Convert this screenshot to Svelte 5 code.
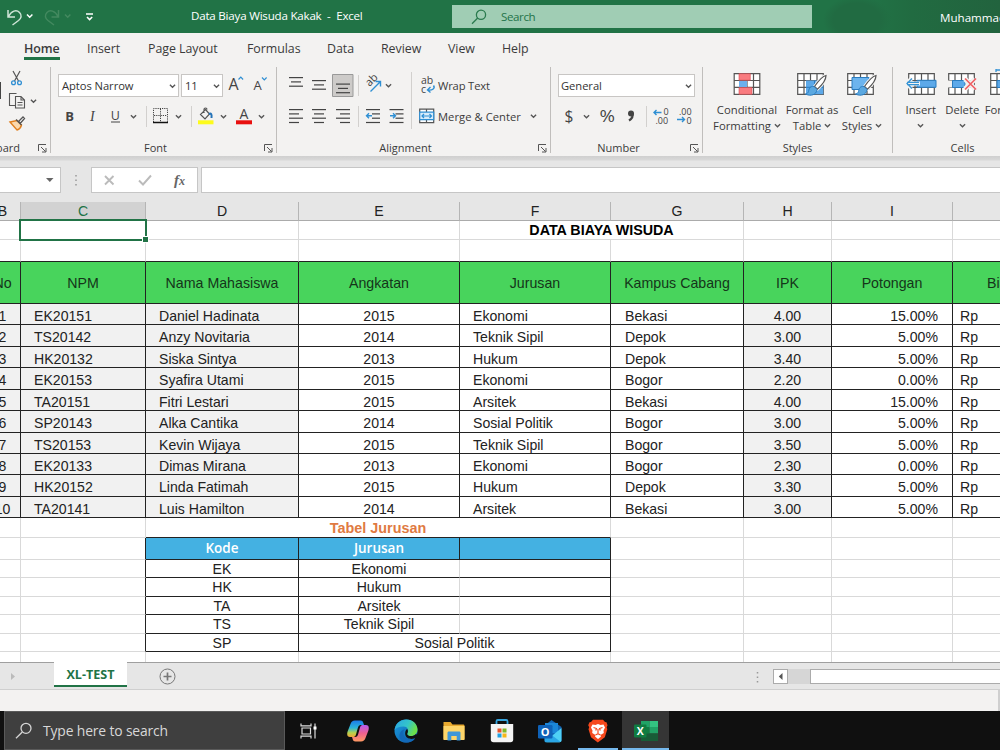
<script>
  const menu = ['Home', 'Insert', 'Page Layout', 'Formulas', 'Data', 'Review', 'View', 'Help'];
  const letters = ['B', 'C', 'D', 'E', 'F', 'G', 'H', 'I', ''];
  const heads = ['No', 'NPM', 'Nama Mahasiswa', 'Angkatan', 'Jurusan', 'Kampus Cabang', 'IPK', 'Potongan', 'Biaya'];

  const students = [
    ['EK20151', 'Daniel Hadinata', 2015, 'Ekonomi', 'Bekasi', '4.00', '15.00%'],
    ['TS20142', 'Anzy Novitaria', 2014, 'Teknik Sipil', 'Depok', '3.00', '5.00%'],
    ['HK20132', 'Siska Sintya', 2013, 'Hukum', 'Depok', '3.40', '5.00%'],
    ['EK20153', 'Syafira Utami', 2015, 'Ekonomi', 'Bogor', '2.20', '0.00%'],
    ['TA20151', 'Fitri Lestari', 2015, 'Arsitek', 'Bekasi', '4.00', '15.00%'],
    ['SP20143', 'Alka Cantika', 2014, 'Sosial Politik', 'Bogor', '3.00', '5.00%'],
    ['TS20153', 'Kevin Wijaya', 2015, 'Teknik Sipil', 'Bogor', '3.50', '5.00%'],
    ['EK20133', 'Dimas Mirana', 2013, 'Ekonomi', 'Bogor', '2.30', '0.00%'],
    ['HK20152', 'Linda Fatimah', 2015, 'Hukum', 'Depok', '3.30', '5.00%'],
    ['TA20141', 'Luis Hamilton', 2014, 'Arsitek', 'Bekasi', '3.00', '5.00%']
  ];
  const kinds = ['c shade', 'l shade', 'l shade', 'c', 'l', 'l wide-pad', 'c shade', 'r', 'rp'];
  const tall = [1, 3, 5, 8];

  const lookup = [
    ['EK', 'Ekonomi'],
    ['HK', 'Hukum'],
    ['TA', 'Arsitek'],
    ['TS', 'Teknik Sipil']
  ];
</script>

{#snippet chev(x, y)}
  <path class="chev" d="M{x - 2.6} {y - 1.3}l2.6 2.6 2.6-2.6" />
{/snippet}

{#snippet launcher()}
  <svg class="launcher" width="9" height="9" viewBox="0 0 9 9"><path d="M.5 7V.5H8M3 3l4.5 4.5M8 4v4H4" fill="none" stroke="#555" /></svg>
{/snippet}

{#snippet blanks(n)}
  {#each Array(n) as _}<div class="cell"></div>{/each}
{/snippet}

{#snippet lines(x, y, widths, align)}
  {#each widths as w, i}
    <rect x={align === 'm' ? x - w / 2 : align === 'r' ? x - w : x} y={y + i * 4.3} width={w} height="1.2" fill="#444" />
  {/each}
{/snippet}

{#snippet sheetIcon()}
  <path d="M.7.7h25.600v20.600H.7zM.7 7.500h25.600M.7 14.300h25.600M7 .7v20.600M13.500.7v20.600M20 .7v20.600" fill="#fff" stroke="#555" stroke-width="1.200" />
{/snippet}

{#snippet brush()}
  <path d="M29 6.500c-3 .5-8 6-11.500 11l3 2.600C25 16 29 10.500 29 6.500z" fill="#fff" stroke="#f3f2f1" stroke-width="3" />
  <path d="M29 6.500c-3 .5-8 6-11.500 11l3 2.600C25 16 29 10.500 29 6.500z" fill="#fff" stroke="#555" stroke-width="1.200" />
  <path d="M17 17.500c-4-.5-5 2-5.500 5-.5 1.500-1.500 2-3 2.500 5 2.500 11 1 11.500-4.500z" fill="#5ba8e0" stroke="#2a7cc0" />
{/snippet}

<div class="screen">
  <header class="titlebar">
    <svg width="191" height="33" viewBox="0 0 191 33" fill="none" stroke="#fff" stroke-width="1.500">
      <path d="M8 10v7h7M8.500 16.500c3-6 8-7 11-4s1.500 6-1 8l-6 4.500" stroke="#cfe5d7" />
      <path d="M27 14.500l2.700 2.700 2.700-2.700" />
      <g stroke="#43895f"><path d="M58.500 10v7h-7M58 16.500c-3-6-8-7-11-4s-1.500 6 1 8l6 4.500" /><path d="M65 14.500l2.700 2.700 2.700-2.700" /></g>
      <path d="M86 14h7M87 17l2.600 2.600L92.200 17" />
    </svg>
    <div class="doc">Data Biaya Wisuda Kakak&nbsp; - &nbsp;Excel</div>
    <div class="find">
      <svg width="16" height="16" viewBox="0 0 16 16" fill="none" stroke="#2a7a4e" stroke-width="1.300"><circle cx="10" cy="5.800" r="4.600" /><path d="M6.700 9L1 14.700" /></svg>
      <span>Search</span>
    </div>
    <div class="user">Muhammad</div>
  </header>

  <nav class="menu">
    {#each menu as m, i}<span class:on={i === 0}>{m}</span>{/each}
  </nav>

  <section class="ribbon">
    <div class="group">
      <svg width="50" height="70" viewBox="0 67 50 70" fill="none">
        <path d="M0 82v17" stroke="#444" stroke-width="2" />
        <path d="M13 71l5.500 10M20 71l-5.500 10" stroke="#555" stroke-width="1.200" />
        <circle cx="13.500" cy="82.800" r="1.900" stroke="#2f8fd3" stroke-width="1.300" /><circle cx="19.500" cy="82.800" r="1.900" stroke="#2f8fd3" stroke-width="1.300" />
        <path d="M15 105.500H9.500v-12h7M15.500 96.500h5.500l3.500 3.500v8h-9zM21 96.500v3.500h3.500M17.500 102.500h5M17.500 105h5" stroke="#555" stroke-width="1.100" />
        {@render chev(33.500, 101)}
        <path d="M10 122l7 8c3-1 4-3 4.500-5l-4.500-4.500z" fill="#fbd9ad" stroke="#e08020" stroke-width="1.400" />
        <path d="M16 119.500l5.500 5.500M18.500 121.500l4.500-4.500 1.500 1.500-4 4.500z" fill="#fff" stroke="#555" stroke-width="1.300" />
      </svg>
      <div class="caption first">Clipboard{@render launcher()}</div>
    </div>

    <div class="group">
      <div class="fontrow">
        <div class="select name">Aptos Narrow<svg width="9" height="6">{@render chev(4.500, 3)}</svg></div>
        <div class="select size">11<svg width="9" height="6">{@render chev(4.500, 3)}</svg></div>
        <svg width="48" height="24" viewBox="225 73 48 24" fill="none">
          <text class="ui" x="228.500" y="90" font-size="16">A</text><path d="M238.500 79.500l2.300-2.300 2.300 2.300" stroke="#2f8fd3" stroke-width="1.200" />
          <text class="ui" x="253.500" y="90" font-size="13">A</text><path d="M262 77.500l2.300 2.300 2.300-2.300" stroke="#2f8fd3" stroke-width="1.200" />
        </svg>
      </div>
      <svg width="225" height="34" viewBox="51 100 225 34" fill="none">
        <text class="ui" x="65.200" y="120.500" font-size="13" font-weight="700">B</text>
        <text class="ui it" x="90" y="120.500" font-size="14">I</text>
        <text class="ui" x="110.700" y="119.500" font-size="12.500">U</text><path d="M111 122h9" stroke="#444" />
        {@render chev(133.500, 116.500)}
        <path d="M146.500 106v21M191.500 106v21" stroke="#d2d0ce" />
        <path d="M153.500 122v-13.500h14V122M160.500 109v13M154 115.500h13" stroke="#444" stroke-dasharray="1.200 1" /><path d="M153 122.500h15" stroke="#111" stroke-width="1.500" />
        {@render chev(178.500, 116.500)}
        <path d="M205.500 109.500l4 4.500-4.500 5-4.500-4.500zM204 113v-3.500c0-2 3-2 3 0" stroke="#555" stroke-width="1.200" /><path d="M209 114c2-1 3 0 2.500 4" stroke="#2573b8" stroke-width="2" />
        <path d="M198 120.300h15.500v4H198z" fill="#fdfb1c" />
        {@render chev(223.500, 116.500)}
        <text class="ui" x="239.500" y="118.500" font-size="14">A</text><path d="M236 120.300h16v4h-16z" fill="#e8100f" />
        {@render chev(261.500, 116.500)}
      </svg>
      <div class="caption">Font{@render launcher()}</div>
    </div>

    <div class="group">
      <div class="alignrow">
        <svg width="142" height="70" viewBox="277 67 142 70" fill="none">
          <path d="M332.500 74.500h20.500v22h-20.500z" fill="#cdcbc9" stroke="#999" />
          {@render lines(296, 77, [14, 10, 14], 'm')}
          {@render lines(319, 80, [14, 10, 14], 'm')}
          {@render lines(343, 83.500, [14, 10, 14], 'm')}
          {@render lines(289, 109, [14, 10, 14, 10], 'l')}
          {@render lines(319, 109, [14, 10, 14, 10], 'm')}
          {@render lines(350, 109, [14, 10, 14, 10], 'r')}
          {@render lines(380, 109, [14, 8, 8, 14], 'r')}
          {@render lines(403.500, 109, [14, 8, 8, 14], 'r')}
          <path d="M358.500 75v21M358.500 106v21M411.500 72v57" stroke="#d2d0ce" />
          <text class="ui" x="0" y="0" font-size="11" transform="translate(369.500 87) rotate(-45)">ab</text>
          <path d="M370.500 91.500L380 82M375.500 81.500h5v5" stroke="#2f8fd3" stroke-width="1.400" />
          {@render chev(388.500, 85.500)}
          <path d="M366.500 115.800h5.500M369 113.300l-2.500 2.500 2.500 2.500M390 115.800h5.500M393 113.300l2.500 2.500-2.500 2.500" stroke="#2f8fd3" stroke-width="1.400" />
        </svg>
        <div class="wrapcol">
          <div class="wide">
            <svg width="19" height="26" viewBox="0 -3 19 26"><text class="ui" x="2" y="9" font-size="10.500">ab</text><text class="ui" x="2" y="17.500" font-size="10.500">c</text><path d="M14.500 10.500c2 3-1 5-5.500 4.500M11.500 12l-3 3 3 2.500" fill="none" stroke="#2f8fd3" stroke-width="1.400" /></svg>
            Wrap Text
          </div>
          <div class="wide merge">
            <svg width="19" height="16" viewBox="0 0 19 16" fill="none"><path d="M.7 1.200h14v13.500h-14zM7.500 1v3M7.500 12v3" fill="#fff" stroke="#555" stroke-width="1.200" /><path d="M.7 4.200h14v7.500h-14z" fill="#d9ecfa" stroke="#2f8fd3" stroke-width="1.200" /><path d="M3 8h9.500M5 6L3 8l2 2M10.500 6l2 2-2 2" stroke="#2f8fd3" stroke-width="1.200" /></svg>
            Merge &amp; Center
            <svg class="push" width="9" height="6">{@render chev(4.500, 3)}</svg>
          </div>
        </div>
      </div>
      <div class="caption">Alignment{@render launcher()}</div>
    </div>

    <div class="group">
      <div class="fontrow"><div class="select num">General<svg width="9" height="6">{@render chev(4.500, 3)}</svg></div></div>
      <svg width="151" height="34" viewBox="551 100 151 34" fill="none">
        <text class="ui" x="564.500" y="122" font-size="15.500">$</text>
        {@render chev(586.500, 116.500)}
        <text class="ui" x="599.500" y="122" font-size="16.500" textLength="15.500" lengthAdjust="spacingAndGlyphs">%</text>
        <circle cx="631" cy="113.500" r="3" fill="#444" /><path d="M632.500 113c1 4-1 6-3.500 7.500" stroke="#444" stroke-width="2.200" />
        <path d="M646.500 106v21" stroke="#d2d0ce" />
        <g class="tiny"><text x="663.500" y="115">0</text><text x="655.500" y="123.500">.00</text><text x="679" y="115">.00</text><text x="686.500" y="123.500">0</text></g>
        <path d="M654 112.500h7.500M656.500 110l-2.500 2.500 2.500 2.500M677 119.500h7.500M682 117l2.500 2.500-2.500 2.500" stroke="#2f8fd3" stroke-width="1.400" />
      </svg>
      <div class="caption">Number{@render launcher()}</div>
    </div>

    <div class="group">
      <div class="bigs styles">
        <div class="big"><svg width="30" height="30" viewBox="0 0 30 30"><g transform="translate(1.500 4)">{@render sheetIcon()}<path d="M5.500.7h11.300v6.500H5.500zM5.500 14.500h13v6.800h-13z" fill="#f97b7f" stroke="#d94b50" stroke-width=".6" /><path d="M5.500 8h8v6h-8z" fill="#6cb0ec" /></g></svg><span>Conditional<br />Formatting <svg width="7" height="6">{@render chev(3.500, 2.500)}</svg></span></div>
        <div class="big"><svg width="30" height="30" viewBox="0 0 30 30"><g transform="translate(0 4)">{@render sheetIcon()}<path d="M9 7.500h17.300v13.800H9z" fill="#5da9e9" /><path d="M9 14.300h17.300M17.500 7.500v13.800" stroke="#2a7cc0" /></g>{@render brush()}</svg><span>Format as<br />Table <svg width="7" height="6">{@render chev(3.500, 2.500)}</svg></span></div>
        <div class="big"><svg width="30" height="30" viewBox="0 0 30 30"><g transform="translate(0 4)">{@render sheetIcon()}<path d="M5 4.500h17v12H5z" fill="#6cb4ee" stroke="#2a7cc0" /></g>{@render brush()}</svg><span>Cell<br />Styles <svg width="7" height="6">{@render chev(3.500, 2.500)}</svg></span></div>
      </div>
      <div class="caption plain">Styles</div>
    </div>

    <div class="group last">
      <div class="bigs cells">
        <div class="big"><svg width="32" height="30" viewBox="0 0 32 30"><g transform="translate(3 4)">{@render sheetIcon()}<path d="M9 7.300h19v7H9z" fill="#5da9e9" stroke="#2a7cc0" /></g><path d="M2 14.500h13M6.500 9.500l-5 5 5 5" fill="none" stroke="#f3f2f1" stroke-width="4" /><path d="M2 13.300h12M2 15.700h12M7 9.500l-5 5 5 5" fill="none" stroke="#3794d5" stroke-width="1.300" /></svg><span>Insert<br /><svg width="7" height="6">{@render chev(3.500, 2.500)}</svg></span></div>
        <div class="big"><svg width="32" height="30" viewBox="0 0 32 30"><g transform="translate(2 4)">{@render sheetIcon()}<path d="M0 7.500h4.500v7H0z" fill="#f3f2f1" /><path d="M4.500 7.500H17v7H4.500z" fill="#5da9e9" stroke="#2a7cc0" /></g><path d="M19 10l10 10M29 10L19 20" stroke="#f3f2f1" stroke-width="5" /><path d="M19 9.500l11 11M30 9.500l-11 11" stroke="#f06065" stroke-width="1.700" /></svg><span>Delete<br /><svg width="7" height="6">{@render chev(3.500, 2.500)}</svg></span></div>
        <div class="big"><svg width="32" height="30" viewBox="0 0 32 30"><g transform="translate(2 4)">{@render sheetIcon()}<path d="M7 7.500h13v7H7z" fill="#5da9e9" stroke="#2a7cc0" /></g><path d="M8 1h14M8-1v4" stroke="#3794d5" stroke-width="1.300" /></svg><span>Format<br /><svg width="7" height="6">{@render chev(3.500, 2.500)}</svg></span></div>
      </div>
      <div class="caption end">Cells</div>
    </div>
  </section>

  <div class="formula">
    <div class="namebox"><svg width="8" height="5"><path d="M0 0h7.500L3.800 4z" fill="#666" /></svg></div>
    <svg class="dots" width="30" height="26"><path d="M15 8v11" stroke="#999" stroke-width="1.500" stroke-dasharray="1.500 3" /></svg>
    <div class="fx">
      <svg width="48" height="24" fill="none" stroke="#bbb" stroke-width="1.900"><path d="M4 8l8.500 8.500M12.500 8L4 16.500" /><path d="M38 12.500l4 4 8-9" /></svg>
      <i>f<small>x</small></i>
    </div>
    <div class="input"></div>
  </div>

  <main class="sheet">
    <div class="row letters">
      {#each letters as l}<div class="cell c" class:cur={l === 'C'}>{l}</div>{/each}
    </div>
    <div class="row top">
      <div class="cell"></div>
      <div class="cell active"></div>
      {@render blanks(2)}
      <div class="cell c span2 title">DATA BIAYA WISUDA</div>
      {@render blanks(3)}
    </div>
    <div class="row gap ink">{@render blanks(9)}</div>
    <div class="row head ink">
      {#each heads as h, i}<div class="cell c" class:far={i === 8}>{h}</div>{/each}
    </div>
    {#each students as s, n}
      <div class="row student ink" class:tall={tall.includes(n)}>
        {#each [n + 1, ...s, 'Rp'] as v, i}<div class="cell {kinds[i]}">{v}</div>{/each}
      </div>
    {/each}
    <div class="row sub">
      {@render blanks(2)}
      <div class="cell c span3 inkb orange">Tabel Jurusan</div>
      {@render blanks(4)}
    </div>
    <div class="row keyhead">
      <div class="cell"></div>
      <div class="cell inkr"></div>
      <div class="cell c blue">Kode</div>
      <div class="cell c blue">Jurusan</div>
      <div class="cell blue"></div>
      {@render blanks(4)}
    </div>
    {#each lookup as [kode, nama], n}
      <div class="row key" class:tall={n % 2 === 1}>
        <div class="cell"></div>
        <div class="cell inkr"></div>
        <div class="cell c inkb inkr">{kode}</div>
        <div class="cell c inkb">{nama}</div>
        <div class="cell inkb inkr"></div>
        {@render blanks(4)}
      </div>
    {/each}
    <div class="row key">
      <div class="cell"></div>
      <div class="cell inkr"></div>
      <div class="cell c inkb inkr">SP</div>
      <div class="cell c span2 inkb inkr">Sosial Politik</div>
      {@render blanks(4)}
    </div>
    <div class="row rest">{@render blanks(9)}</div>
  </main>

  <div class="tabs">
    <svg width="54" height="27"><path d="M11 10l4 3.500-4 3.500z" fill="#bbb" /></svg>
    <div class="tab">XL-TEST</div>
    <svg class="plus" width="17" height="17" fill="none" stroke="#777"><circle cx="8.500" cy="8.500" r="7.500" /><path d="M4.500 8.500h8M8.500 4.500v8" stroke-width="1.700" /></svg>
    <div class="scroll">
      <svg width="16" height="27"><path d="M7.500 9v11" stroke="#999" stroke-width="1.500" stroke-dasharray="1.500 3" /></svg>
      <div class="arrow"><svg width="5" height="8"><path d="M4.500 0v7L.8 3.500z" fill="#555" /></svg></div>
      <div class="track"></div>
      <div class="thumb"></div>
    </div>
  </div>
  <div class="status"></div>

  <footer class="taskbar">
    <div class="search">
      <svg width="18" height="18" viewBox="0 0 18 18" fill="none" stroke="#d5d5d5" stroke-width="1.300"><circle cx="11" cy="6.300" r="5" /><path d="M7.300 10L1 16.300" /></svg>
      Type here to search
    </div>
    <div class="app view">
      <svg width="18" height="18" viewBox="0 0 18 18" fill="none" stroke="#ddd" stroke-width="1.200"><path d="M1 1.500v2.300h10V1.500M1 16.500v-2.300h10v2.300M2 6h8.500v6H2zM15 1.500v15" /><path d="M13.500 4.500h3v3h-3z" fill="#fff" stroke="none" /></svg>
    </div>
    <div class="app">
      <svg width="24" height="24" viewBox="0 0 24 24">
        <defs>
          <linearGradient id="ca" x1="0" y1="0" x2="0" y2="1"><stop offset="0" stop-color="#1b7bea" /><stop offset=".45" stop-color="#2bb5d8" /><stop offset=".75" stop-color="#b9d34a" /><stop offset="1" stop-color="#f3a33a" /></linearGradient>
          <linearGradient id="cb" x1="0" y1="0" x2="0" y2="1"><stop offset="0" stop-color="#b55cf0" /><stop offset=".5" stop-color="#f0608f" /><stop offset="1" stop-color="#ff9a62" /></linearGradient>
        </defs>
        <path d="M9 1.500h5.500c2 0 2.500 1.300 3 3l.5 1.500h-3c-2 0-2.600 1-3.200 3L10 15.500c-.6 2-1.500 2.500-3.500 2.500H4C1 18 .8 15 1.600 12.500L4.500 5C5.300 2.700 6.500 1.500 9 1.500z" fill="url(#ca)" />
        <path d="M15 22.500H9.500c-2 0-2.500-1.300-3-3L6 18h3c2 0 2.600-1 3.200-3L14 8.500c.6-2 1.500-2.500 3.500-2.500H20c3 0 3.200 3 2.400 5.500L19.500 19c-.8 2.300-2 3.500-4.500 3.500z" fill="url(#cb)" />
      </svg>
    </div>
    <div class="app">
      <svg width="24" height="24" viewBox="0 0 24 24">
        <defs>
          <linearGradient id="ea" x1="0" y1="0" x2="1" y2=".4"><stop offset="0" stop-color="#2aa4e6" /><stop offset=".6" stop-color="#34c5c9" /><stop offset="1" stop-color="#6be04a" /></linearGradient>
          <linearGradient id="eb" x1="0" y1="0" x2="1" y2="1"><stop offset="0" stop-color="#1b9de2" /><stop offset="1" stop-color="#0c59a4" /></linearGradient>
        </defs>
        <circle cx="12" cy="12" r="11.500" fill="url(#eb)" />
        <path d="M.6 11C1.500 4 6.500.4 12.500.4 19 .4 23.500 5 23.500 10.500c0 4-3 6.500-6.500 6.500-3 0-4.500-1.500-3.500-3 1.800-3 0-6.500-4-6.500C5 7.500 2 9 .6 11z" fill="url(#ea)" />
        <path d="M13.500 14c-1 1.500.5 3 3.500 3 2 0 4-.7 5.200-2.300l2 3.300-4 1.500c-3 1-8.500.5-9-4.500-.2-3 1-4.500 2-5 .8 1.300 1 2.700.3 4z" fill="#101010" />
        <path d="M11 10c-3 3-2 10 5 10.500 2 .2 4-.5 5.300-1.200C19 22.500 15.500 23.800 12 23.600 7 23 5 19 5.500 15.500 6 12.500 8.500 10.500 11 10z" fill="#1268b8" />
      </svg>
    </div>
    <div class="app">
      <svg width="24" height="22" viewBox="0 0 24 22"><path d="M1.500 2h7l2 2.500H21c.8 0 1.500.5 1.500 1.300V19H1.500z" fill="#e8a92e" /><path d="M1.500 6h21v14h-21z" fill="#fdd56a" /><path d="M5.500 20.500V13c0-1 .5-1.500 1.500-1.500h10c1 0 1.500.5 1.500 1.500v7.500h-3.800V16H9.300v4.500z" fill="#3f97d8" /></svg>
    </div>
    <div class="app">
      <svg width="24" height="24" viewBox="0 0 24 24"><path d="M6.500 5.500V2.300c0-.8.500-1.300 1.300-1.300h8.400c.8 0 1.300.5 1.300 1.300v3.200" fill="none" stroke="#35a3dc" stroke-width="1.800" /><path d="M.8 5h22.400v15.500c0 1.700-1 2.700-2.700 2.700h-17c-1.700 0-2.700-1-2.700-2.700z" fill="#f4f4f4" /><path d="M7.500 9.500h4v4h-4z" fill="#e8532b" /><path d="M12.500 9.500h4v4h-4z" fill="#7fb928" /><path d="M7.500 14.500h4v4h-4z" fill="#1fa1e3" /><path d="M12.500 14.500h4v4h-4z" fill="#f6b617" /></svg>
    </div>
    <div class="app">
      <svg width="24" height="24" viewBox="0 0 24 24"><path d="M5 8l8.500-7L23.500 8v13c0 1-.7 2-2 2H7z" fill="#1265b5" /><path d="M7 4h13v10H7z" fill="#1b86d8" /><path d="M23.500 9L7 22.500c.4.500 1 .8 2 .8h12.500c1.300 0 2-.8 2-2z" fill="#4fd0f5" /><path d="M7 11l15.500 11.800c-.5.400-1 .5-1.500.5H8c-1 0-1.500-.7-1.500-1.500z" fill="#2aa6e6" /><rect y="6" width="14.500" height="13.500" rx="1.300" fill="#0f62b8" /><text class="logo" x="7.200" y="16.800" font-size="11">O</text></svg>
    </div>
    <div class="app open">
      <svg width="20" height="24" viewBox="0 0 20 24"><path d="M5 .7h10L17 3l1.500.2 1 3-.8 2 .6 2-2.500 8-7 5.300-6.800-5.300-2.500-8 .7-2-1-2 1.300-3L3 3z" fill="#f6491d" /><path d="M4.500 5.500l3 .5L10 5l2.500 1 3-.5 1.500 3-1.500 3 .3 2.500L12.500 16l.5 1.500-3 2.500-3-2.500.5-1.500-3.300-2 .3-2.500L3 8.500z" fill="#fff" /><path d="M5.500 8.500l3 1-.8 2M14.500 8.500l-3 1 .8 2M10 10v4M7.500 16L10 14.700l2.500 1.300" fill="none" stroke="#f6491d" stroke-width="1.200" /></svg>
    </div>
    <div class="app open current">
      <svg width="24" height="22" viewBox="0 0 24 22"><path d="M7 1h8.500v7H7z" fill="#21a366" /><path d="M15.500 1H24v6h-8.500z" fill="#33c481" /><path d="M7 7h8.500v7H7z" fill="#107c41" /><path d="M15.500 7H24v6.500h-8.500z" fill="#21a366" /><path d="M7 13.500h17V21H7z" fill="#185c37" /><rect y="4.500" width="12.500" height="13" rx="1" fill="#107c41" /><text class="logo" x="6.200" y="14.800" font-size="10.500">X</text></svg>
    </div>
  </footer>
</div>

<style>
  :global(body){margin:0;overflow:hidden}
  .screen{width:1000px;height:750px;overflow:hidden;display:flex;flex-direction:column;background:#fff;font-family:"Open Sans","Noto Sans",sans-serif;color:#3b3b3b}
  .screen svg{display:block;flex:none}
  .chev{fill:none;stroke:#555;stroke-width:1.3}
  .ui{font-family:"Open Sans","Noto Sans",sans-serif;fill:#444}
  .it{font-family:"Liberation Serif",serif;font-style:italic}
  .tiny{font:9px "Open Sans",sans-serif;fill:#444}
  .logo{font-family:"Open Sans",sans-serif;font-weight:700;fill:#fff;text-anchor:middle}

  .titlebar{height:33px;flex:none;background:#217346;display:grid;grid-template-columns:191px 261px 360px 188px;color:#fff;font-size:11.6px;line-height:32px;white-space:nowrap}
  .doc{letter-spacing:-.22px}
  .find{height:23px;margin-top:5px;background:#a0cdb4;color:#24744a;display:flex;align-items:center;line-height:23px;letter-spacing:-.4px}
  .find svg{margin-left:19px;margin-right:14px}
  .user{padding-left:128px;line-height:35px;overflow:hidden;background:radial-gradient(ellipse 34px 24px at 45px 20px,#216b42 70%,transparent),linear-gradient(90deg,transparent 55px,#216b41 100px,#22633e)}

  .menu{height:31px;flex:none;background:#f3f2f1;padding-left:24px;display:grid;grid-template-columns:63px 61px 99px 80px 54px 67px 54px 60px;justify-content:start;font-size:12.4px;letter-spacing:-.05px;line-height:31px;white-space:nowrap}
  .menu span{justify-self:start}
  .menu .on{font-weight:600;height:24px;border-bottom:3px solid #217346}

  .ribbon{height:92px;flex:none;background:#f3f2f1;display:grid;grid-template-columns:51px 226px 274px 152px 190px 107px;overflow:hidden}
  .group{box-sizing:border-box;height:86px;margin-top:3px;border-right:1px solid #c0bebc;display:flex;flex-direction:column;min-width:0}
  .group.last{border-right:0}
  .caption{margin-top:auto;height:10px;line-height:10px;font-size:11px;display:flex;justify-content:center;position:relative;white-space:nowrap;padding-right:16px}
  .caption.first{justify-content:flex-end;padding-right:30px}
  .caption.plain{padding-right:0}
  .caption.end{padding:0 0 0 32px}
  .caption .launcher{position:absolute;right:3px;top:1px}
  .fontrow{display:flex;padding:6px 0 3px 7px;height:24px}
  .select{box-sizing:border-box;height:23px;margin-top:1px;background:#fff;border:1px solid #c8c6c4;display:flex;align-items:center;justify-content:space-between;padding:0 1px 0 3px;font-size:11.2px;letter-spacing:-.05px;color:#333;white-space:nowrap}
  .select.name{width:121px;margin-right:2px}
  .select.size{width:42px;margin-right:2px}
  .select.num{width:137px;padding-left:2px}
  .alignrow{display:flex}
  .wrapcol{display:flex;flex-direction:column;padding-top:8px;gap:11px}
  .wide{height:20px;display:flex;align-items:center;font-size:11.2px;letter-spacing:-.15px;white-space:nowrap}
  .wide.merge{letter-spacing:.05px}
  .wide .push{margin-left:8px}
  .bigs{display:flex;padding-top:2px}
  .big{display:flex;flex-direction:column;align-items:center;font-size:11.3px;line-height:15.5px;text-align:center;white-space:nowrap;flex:none}
  .big span{margin-top:3px}
  .big span svg{display:inline-block;vertical-align:1px}
  .styles{padding-left:9px}
  .styles .big{width:70px}
  .styles .big:nth-child(2){width:60px}
  .styles .big:nth-child(3){width:40px}
  .cells{padding-left:7px}
  .cells .big{width:41.5px}

  .formula{height:42px;flex:none;padding-top:4px;background:linear-gradient(#cfcfcf 0,#d8d8d8 4px,#e6e6e6 5px);display:flex}
  .formula > *{height:24px;margin-top:7px;box-sizing:content-box}
  .namebox{width:60px;background:#fff;border:1px solid #c6c6c6;border-left:0;display:flex;align-items:center;justify-content:flex-end}
  .namebox svg{margin-right:6px}
  .fx{width:105px;background:#fff;border:1px solid #c6c6c6;display:flex;align-items:center}
  .fx svg{margin-left:9px;overflow:visible}
  .fx i{margin-left:25px;font:italic bold 15px "Liberation Serif",serif;color:#666}
  .fx small{font-size:12px}
  .input{flex:1;margin-left:3px;background:#fff;border:1px solid #c6c6c6;border-right:0}

  .sheet{height:460px;flex:none;overflow:hidden;font:14.1px "Liberation Sans",Arial,sans-serif;color:#222}
  .row{display:grid;grid-template-columns:36px 125px 153px 161px 151px 133px 88px 121px 80px;grid-template-rows:100%;margin-left:-15px}
  .cell{box-sizing:border-box;border-right:1px solid #d9d9d9;border-bottom:1px solid #d9d9d9;min-width:0;min-height:0;white-space:nowrap;position:relative}
  .c{text-align:center}
  .span2{grid-column:span 2}
  .span3{grid-column:span 3}
  .ink .cell,.inkb{border-bottom-color:#222}
  .inkr{border-right-color:#222}

  .letters{height:19px;background:#e6e6e6}
  .letters .cell{border-right-color:#b5b5b5;border-bottom-color:#ababab;line-height:19px}
  .letters .cur{background:#d2d2d2;color:#217346}
  .top{height:19px}
  .title{font-weight:700;font-size:14.3px;line-height:19px;color:#000}
  .active::before{content:"";position:absolute;left:-2px;top:-2px;width:124px;height:18px;border:2px solid #217346;z-index:1}
  .active::after{content:"";position:absolute;right:-3px;bottom:-3px;width:5px;height:5px;background:#217346;outline:1px solid #fff;z-index:2}
  .gap{height:22px}
  .head{height:42px}
  .head .cell{background:#48d45c;border-right-color:#222;line-height:42px;color:#15351a;font-size:14.2px}
  .head .far{text-align:left;padding-left:34px}
  .student{height:21px}
  .student.tall{height:22px}
  .student .cell{border-right-color:#222;line-height:25px}
  .l{padding-left:13px}
  .wide-pad{padding-left:14px}
  .r{text-align:right;padding-right:14px}
  .rp{padding-left:7px}
  .shade{background:#f1f1f1}
  .sub{height:20px}
  .orange{color:#e07a42;font-weight:700;font-size:14.4px;line-height:20px}
  .keyhead{height:22px}
  .blue{background:#44b1e2;border-color:#222;color:#fff;font:600 13.5px/21px "Open Sans",sans-serif}
  .key{height:18px;line-height:19px}
  .key.tall{height:19px}
  .rest{height:30px}

  .tabs{height:28px;flex:none;box-sizing:border-box;border-top:1px solid #9f9f9f;border-bottom:1px solid #cfcfcf;background:#e6e6e6;display:flex}
  .tab{width:73px;height:23px;margin-top:-1px;box-sizing:content-box;background:#fff;border-bottom:2px solid #217346;color:#217346;font-weight:700;font-size:12.6px;line-height:26px;text-align:center}
  .plus{margin:5px 0 0 32px}
  .scroll{margin-left:auto;width:250px;display:flex}
  .arrow{box-sizing:border-box;width:15px;height:15px;margin:6px 0 0 7px;background:#fff;border:1px solid #ababab;display:flex;align-items:center;justify-content:center}
  .track{width:22px;height:15px;margin-top:6px;background:#d6d6d6}
  .thumb{box-sizing:border-box;flex:1;height:15px;margin-top:6px;background:#fff;border:1px solid #ababab;border-right:0}
  .status{height:21px;flex:none;background:#f3f2f1;margin-right:2px;box-shadow:2px 0 #cfcfcf}

  .taskbar{height:39px;flex:none;background:#101010;display:flex}
  .search{box-sizing:border-box;width:281px;margin:0 0 0 4px;border:1px solid #5a5a5a;background:#3f3f3f;color:#d8d8d8;display:flex;align-items:center;font-size:13.9px;letter-spacing:-.15px}
  .search svg{margin:0 10px 0 10px}
  .app{box-sizing:border-box;width:47px;margin-right:1px;display:flex;align-items:center;justify-content:center}
  .app.view{margin-right:2px}
  .open{border-bottom:2px solid #76b9ed;padding-top:2px;width:40px;margin:0 4px}
  .current{width:47px;margin:0;background:#353535}
</style>
